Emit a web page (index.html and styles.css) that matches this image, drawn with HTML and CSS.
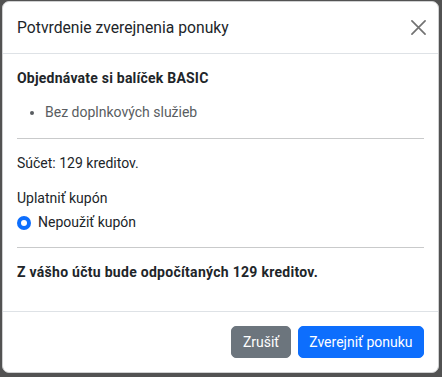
FILE: index.html
```html
<!DOCTYPE html>
<html lang="sk">
<head>
<meta charset="utf-8">
<title>Potvrdenie zverejnenia ponuky</title>
<link rel="stylesheet" href="styles.css">
</head>
<body>
<div class="modal">
  <div class="modal-header">
    <h5 class="modal-title">Potvrdenie zverejnenia ponuky</h5>
    <button class="btn-close" type="button" aria-label="Close">
      <svg width="15" height="15" viewBox="0 0 16 16"><path d="M1 1L15 15M15 1L1 15" stroke="#000" stroke-width="1.8" stroke-linecap="round" fill="none"/></svg>
    </button>
  </div>
  <div class="modal-body">
    <p class="package">Objednávate si balíček BASIC</p>
    <ul class="services">
      <li>Bez doplnkových služieb</li>
    </ul>
    <hr>
    <p class="sum">Súčet: 129 kreditov.</p>
    <label class="coupon-label">Uplatniť kupón</label>
    <div class="form-check">
      <span class="radio"></span>
      <span class="form-check-label">Nepoužiť kupón</span>
    </div>
    <hr>
    <p class="total">Z vášho účtu bude odpočítaných 129 kreditov.</p>
  </div>
  <div class="modal-footer">
    <button class="btn btn-secondary" type="button">Zrušiť</button>
    <button class="btn btn-primary" type="button">Zverejniť ponuku</button>
  </div>
</div>
</body>
</html>
```
FILE: styles.css
```css
html, body {
  margin: 0;
  padding: 0;
}
body {
  background: #525252;
  width: 442px;
  height: 377px;
  overflow: hidden;
  font-family: Roboto, "Liberation Sans", sans-serif;
  font-size: 14px;
  line-height: 1.5;
  color: #212529;
  padding: 1px 3px 0 2px;
  box-sizing: border-box;
}
.modal {
  width: 437px;
  background: #fff;
  border: 1px solid #cfd0d1;
  border-radius: 7px;
  box-sizing: border-box;
  display: flex;
  flex-direction: column;
}
.modal-header {
  display: flex;
  align-items: center;
  justify-content: space-between;
  padding: 12.5px 14px;
  border-bottom: 1px solid #dee2e6;
}
.modal-title {
  margin: 0;
  font-size: 15.7px;
  font-weight: 400;
  line-height: 26.25px;
}
.btn-close {
  border: 0;
  background: transparent;
  padding: 0;
  margin-right: -2px;
  width: 15px;
  height: 15px;
  opacity: 0.55;
  display: flex;
}
.modal-body {
  padding: 14px;
}
.modal-body p {
  margin: 0;
}
.package {
  font-weight: 700;
  letter-spacing: 0.22px;
  margin-bottom: 13px !important;
}
.services {
  margin: 0 0 15px;
  padding-left: 28px;
  color: #595d61;
}
hr {
  margin: 14px 0;
  border: 0;
  border-top: 1px solid #c9cacb;
}
.services + hr {
  margin-top: 0;
}
.sum {
  margin-bottom: 14px !important;
}
.coupon-label {
  display: block;
  margin-bottom: 3px;
}
.form-check {
  display: flex;
  align-items: flex-start;
  gap: 7px;
}
.radio {
  width: 14px;
  height: 14px;
  margin-top: 3.5px;
  border-radius: 50%;
  background: #0d6efd;
  box-sizing: border-box;
  display: flex;
  align-items: center;
  justify-content: center;
}
.radio::after {
  content: "";
  width: 6px;
  height: 6px;
  border-radius: 50%;
  background: #fff;
}
.total {
  font-weight: 700;
  letter-spacing: 0.28px;
  margin-bottom: 14px !important;
}
.modal-footer {
  display: flex;
  justify-content: flex-end;
  gap: 7px;
  padding: 14px;
  border-top: 1px solid #dee2e6;
}
.btn {
  font-family: inherit;
  font-size: 14px;
  line-height: 21px;
  padding: 4.5px 10.5px;
  border: 1px solid transparent;
  border-radius: 5px;
  color: #fff;
}
.btn-secondary {
  background: #6c757d;
  border-color: #6c757d;
}
.btn-primary {
  background: #0d6efd;
  border-color: #0d6efd;
}
```
